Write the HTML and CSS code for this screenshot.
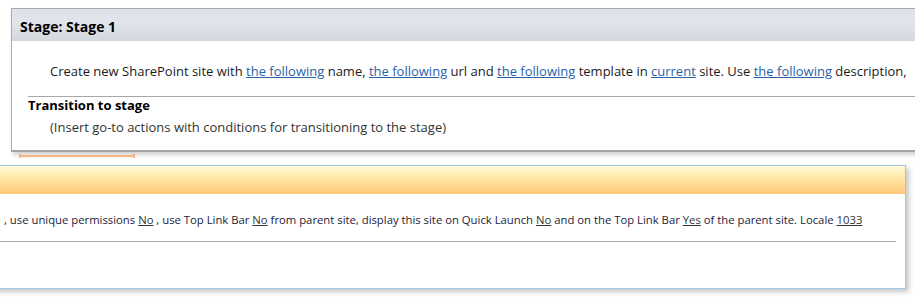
FILE: index.html
```html
<!DOCTYPE html>
<html>
<head>
<meta charset="utf-8">
<link rel="stylesheet" href="styles.css">
</head>
<body>
<div class="canvas">
  <section class="stage">
    <header class="stage-head">Stage: Stage 1</header>
    <div class="stage-body">
      <p class="action">Create new SharePoint site with <a href="#">the following</a> name, <a href="#">the following</a> url and <a href="#">the following</a> template in <a href="#">current</a> site. Use <a href="#">the following</a> description,</p>
      <div class="transition">
        <div class="transition-title">Transition to stage</div>
        <p class="hint">(Insert go-to actions with conditions for transitioning to the stage)</p>
      </div>
    </div>
  </section>
  <div class="connector"></div>
  <section class="stage stage-active">
    <header class="stage-head active-head"></header>
    <div class="active-body">
      <p class="action2">, use unique permissions <a href="#">No</a> , use Top Link Bar <a href="#">No</a> from parent site, display this site on Quick Launch <a href="#">No</a> and on the Top Link Bar <a href="#">Yes</a> of the parent site. Locale <a href="#">1033</a></p>
      <div class="rule"></div>
    </div>
  </section>
</div>
</body>
</html>
```

FILE: styles.css
```css
html, body {
  margin: 0;
  padding: 0;
  background: #ffffff;
}
.canvas {
  width: 915px;
  height: 299px;
  overflow: hidden;
  font-family: "Open Sans", "Noto Sans", sans-serif;
  font-size: 13px;
  color: #1b1b1b;
  padding-top: 8px;
  box-sizing: border-box;
}
.stage {
  margin-left: 11px;
  width: 1000px;
  border: 1px solid #a9a9a9;
  border-bottom: 2px solid #a6a6a6;
  background: #fff;
  box-shadow: 2px 3px 4px rgba(0,0,0,0.18);
}
.stage-head {
  height: 32px;
  line-height: 35px;
  padding-left: 8px;
  font-weight: bold;
  font-size: 14px;
  color: #000;
  background: linear-gradient(#dde1e8, #e2e6ec 40%, #d3d7de);
}
.stage-body {
  padding: 22px 0 14px 0;
}
.action {
  margin: 0 0 0 38px;
  line-height: 17px;
  white-space: nowrap;
}
.action a {
  color: #2a62a8;
  text-decoration: underline;
}
.transition {
  margin: 16px 0 0 16px;
  border-top: 1px solid #a9a9a9;
}
.transition-title {
  font-weight: bold;
  line-height: 17px;
  color: #000;
}
.hint {
  margin: 5px 0 0 22px;
  line-height: 17px;
  color: #333;
}
.connector {
  position: relative;
  margin: 3px 0 0 19px;
  width: 116px;
  height: 2px;
  background: #f6b384;
}
.connector::before,
.connector::after {
  content: "";
  position: absolute;
  top: -1px;
  width: 2px;
  height: 4px;
  background: #f6b384;
}
.connector::before { left: 0; }
.connector::after { right: 0; }
.stage-active {
  margin-top: 8px;
  margin-left: -10px;
  width: 914px;
  height: 122px;
  border: 1px solid #9fc6e6;
  box-shadow: 3px 3px 5px rgba(0,0,0,0.22);
}
.active-head {
  height: 28px;
  background: linear-gradient(#fffbd6, #ffe8a8 40%, #ffc878);
}
.active-body {
  padding-top: 18px;
}
.action2 {
  margin: 0 0 0 13px;
  font-size: 11.3px;
  line-height: 16px;
  white-space: nowrap;
  color: #1c1c3c;
}
.action2 a {
  color: #333;
  text-decoration: underline;
}
.rule {
  margin-top: 13px;
  width: 905px;
  border-top: 1px solid #a9a9a9;
}
```
